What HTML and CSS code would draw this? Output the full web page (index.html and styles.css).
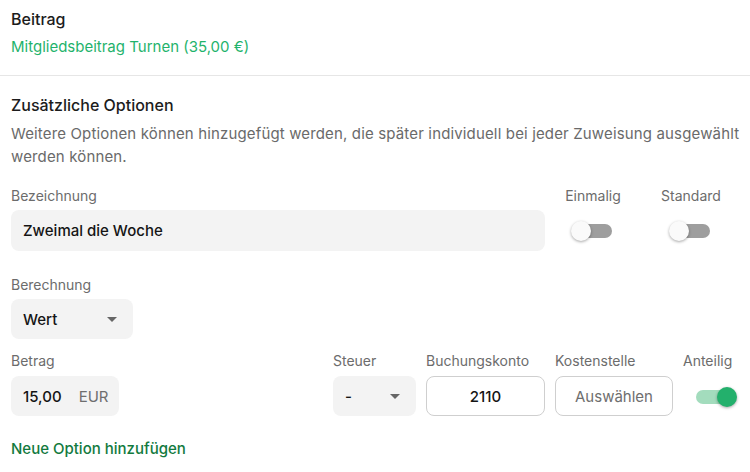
FILE: index.html
```html
<!DOCTYPE html>
<html lang="de">
<head>
<meta charset="utf-8">
<link rel="stylesheet" href="styles.css">
</head>
<body>
<section class="beitrag">
  <div class="title">Beitrag</div>
  <div class="fee">Mitgliedsbeitrag Turnen (35,00 €)</div>
</section>
<hr class="divider">
<section class="options">
  <div class="title">Zusätzliche Optionen</div>
  <p class="desc">Weitere Optionen können hinzugefügt werden, die später individuell bei jeder Zuweisung ausgewählt werden können.</p>

  <div class="row-name">
    <div class="field">
      <div class="label">Bezeichnung</div>
      <div class="input filled">Zweimal die Woche</div>
    </div>
    <div class="field center">
      <div class="label">Einmalig</div>
      <div class="toggle-wrap"><span class="toggle"><span class="thumb"></span></span></div>
    </div>
    <div class="field center">
      <div class="label">Standard</div>
      <div class="toggle-wrap"><span class="toggle"><span class="thumb"></span></span></div>
    </div>
  </div>

  <div class="field calc">
    <div class="label">Berechnung</div>
    <div class="input filled select w-calc"><span>Wert</span><span class="caret"></span></div>
  </div>

  <div class="row-amount">
    <div class="field">
      <div class="label">Betrag</div>
      <div class="input filled w-amount"><span>15,00</span><span class="unit">EUR</span></div>
    </div>
    <div class="field push">
      <div class="label">Steuer</div>
      <div class="input filled select w-tax"><span>-</span><span class="caret"></span></div>
    </div>
    <div class="field">
      <div class="label">Buchungskonto</div>
      <div class="input outline w-acc">2110</div>
    </div>
    <div class="field">
      <div class="label">Kostenstelle</div>
      <div class="input outline w-cost placeholder">Auswählen</div>
    </div>
    <div class="field w-share">
      <div class="label">Anteilig</div>
      <div class="toggle-wrap share"><span class="toggle on"><span class="thumb"></span></span></div>
    </div>
  </div>

  <a class="add" href="#">Neue Option hinzufügen</a>
</section>
</body>
</html>
```
FILE: styles.css
```css
* { box-sizing: border-box; }
html, body { margin: 0; padding: 0; background: #fff; }
body {
  font-family: Inter, Roboto, "Liberation Sans", Arial, sans-serif;
  color: #1c1c1c;
  width: 750px;
  height: 472px;
  overflow: hidden;
}
.beitrag { padding: 8px 8px 0 11px; }
.title { font-size: 16px; line-height: 22px; font-weight: 500; color: #1c1c1c; }
.fee { margin-top: 6px; font-size: 15px; line-height: 22px; color: #1fb36c; }
.divider { margin: 17px 0 0; border: 0; border-top: 1px solid #e6e6e6; height: 0; }
.options { padding: 18px 8px 0 11px; }
.desc { margin: 6px 0 0; font-size: 15px; line-height: 23px; color: #6a6a6a; letter-spacing: 0.15px; }
.label { font-size: 14px; line-height: 20px; color: #6c6c6c; margin-bottom: 4px; white-space: nowrap; }
.field { display: flex; flex-direction: column; }
.field.center { align-items: center; }
.row-name {
  display: grid;
  grid-template-columns: 534px 96px 100px;
  margin-top: 18px;
}
.input {
  height: 41px;
  border-radius: 8px;
  font-size: 15px;
  display: flex;
  align-items: center;
  padding: 0 12px;
  color: #151515;
  font-weight: 500;
}
.filled { background: #f3f3f3; }
.outline { background: #fff; border: 1px solid #cfcfcf; justify-content: center; font-weight: 500; }
.placeholder { color: #6e6e6e; font-weight: 400; }
.select { justify-content: space-between; padding-right: 16px; }
.caret {
  width: 0; height: 0;
  border-left: 5px solid transparent;
  border-right: 5px solid transparent;
  border-top: 5px solid #666;
}
.toggle-wrap { height: 41px; display: flex; align-items: center; }
.toggle {
  position: relative;
  display: block;
  width: 38px;
  height: 14px;
  border-radius: 7px;
  background: #9e9e9e;
}
.thumb {
  position: absolute;
  top: -3px;
  left: -3px;
  width: 20px;
  height: 20px;
  border-radius: 50%;
  background: #fafafa;
  box-shadow: 0 1px 3px rgba(0,0,0,0.35);
}
.toggle.on { background: #a3dcbd; }
.toggle.on .thumb { left: auto; right: -3px; background: #23b06c; }
.calc { margin-top: 24px; }
.calc .input { height: 40px; }
.w-calc { width: 122px; }
.row-amount { display: flex; margin-top: 12px; }
.row-amount .label { margin-bottom: 5px; }
.row-amount .input { height: 40px; }
.w-amount { width: 108px; gap: 17px; }
.unit { color: #6e6e6e; font-weight: 400; }
.w-tax { width: 83px; }
.row-amount .field + .field { margin-left: 10px; }
.row-amount .push { margin-left: auto !important; }
.w-acc { width: 119px; }
.w-cost { width: 118px; }
.w-share { width: 59px; }
.share { padding-left: 13px; }
.add {
  display: block;
  margin-top: 21px;
  font-size: 15px;
  line-height: 22px;
  font-weight: 500;
  color: #127a3e;
  text-decoration: none;
}
```
